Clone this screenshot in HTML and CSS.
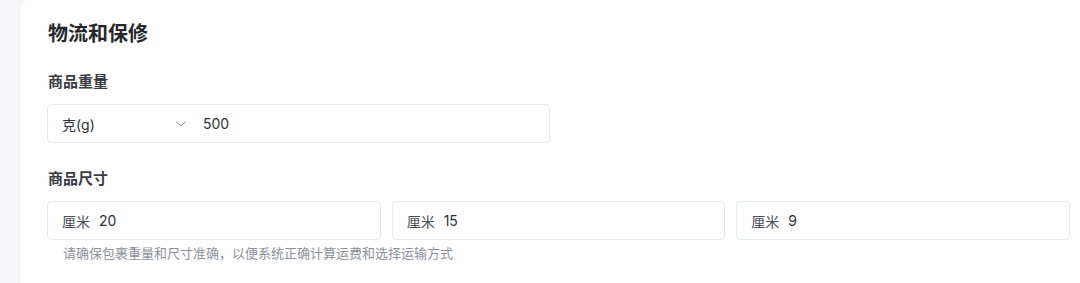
FILE: index.html
```html
<!DOCTYPE html>
<html lang="zh-CN">
<head>
<meta charset="utf-8">
<link rel="stylesheet" href="styles.css">
</head>
<body>
<div class="page">
  <section class="card">
    <h2 class="title">物流和保修</h2>
    <div class="field">
      <div class="label">商品重量</div>
      <div class="box weight">
        <div class="select">
          <span>克(g)</span>
          <svg class="chev" width="12" height="8" viewBox="0 0 12 8"><path d="M1.5 2 L6 6 L10.5 2" fill="none" stroke="#8a8f9c" stroke-width="1" stroke-linecap="round" stroke-linejoin="round"/></svg>
        </div>
        <span class="val">500</span>
      </div>
    </div>
    <div class="field">
      <div class="label">商品尺寸</div>
      <div class="dims">
        <div class="box"><span class="unit">厘米</span><span class="val">20</span></div>
        <div class="box"><span class="unit">厘米</span><span class="val">15</span></div>
        <div class="box"><span class="unit">厘米</span><span class="val">9</span></div>
      </div>
      <div class="hint">请确保包裹重量和尺寸准确，以便系统正确计算运费和选择运输方式</div>
    </div>
  </section>
</div>
</body>
</html>
```

FILE: styles.css
```css
* { box-sizing: border-box; }
html, body { margin: 0; padding: 0; }
body {
  background: #f7f7fb;
  font-family: "Inter", "Noto Sans CJK SC", sans-serif;
  color: #2b2d33;
  width: 1080px;
  height: 283px;
  overflow: hidden;
}
.page { padding-left: 21px; height: 283px; }
.card {
  background: #fff;
  border-radius: 8px 0 0 0;
  height: 283px;
  padding: 21px 10px 0 27px;
}
.title {
  margin: 0;
  font-size: 20px;
  line-height: 26px;
  font-weight: 700;
  color: #25272d;
}
.field { margin-top: 25px; }
.field + .field { margin-top: 26px; }
.label {
  font-size: 15px;
  line-height: 20px;
  font-weight: 700;
  color: #3a3c44;
  margin-bottom: 12px;
}
.box {
  height: 39px;
  border: 1px solid #e6e8f1;
  border-radius: 4px;
  display: flex;
  align-items: center;
  padding: 0 14px;
  font-size: 14px;
  color: #2e3038;
  background: #fff;
}
.weight { width: 503px; margin-left: -1px; }
.select {
  width: 141px;
  display: flex;
  align-items: center;
  justify-content: space-between;
  padding-right: 16px;
}
.chev { display: block; }
.dims {
  display: grid;
  grid-template-columns: repeat(3, 1fr);
  gap: 11px;
  margin-left: -1px;
}
.unit { color: #4a4d57; margin-right: 9px; }
.hint {
  margin-top: 4px;
  padding-left: 15px;
  font-size: 13px;
  line-height: 18px;
  color: #8d909a;
}
```
